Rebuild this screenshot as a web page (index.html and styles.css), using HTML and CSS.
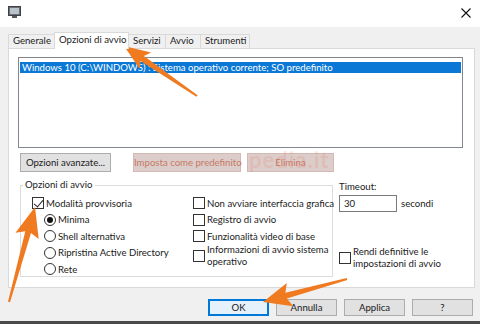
FILE: index.html
```html
<!DOCTYPE html>
<html lang="it">
<head>
    <meta charset="UTF-8">
    <title>Configurazione di sistema</title>
    <link rel="stylesheet" href="styles.css">
</head>
<body>
    <div class="titlebar">
        <svg class="app-icon" width="13" height="13" viewBox="0 0 13 13">
            <rect x="0.5" y="0.5" width="12" height="9" fill="#6b6f75" stroke="#3e4247"/>
            <rect x="2" y="2" width="9" height="6" fill="#b9c3cc"/>
            <rect x="4" y="10" width="5" height="2" fill="#55595e"/>
        </svg>
        <svg class="close" width="10" height="10" viewBox="0 0 10 10">
            <path d="M0.5 0.5 L9.5 9.5 M9.5 0.5 L0.5 9.5" stroke="#111" stroke-width="1.1"/>
        </svg>
    </div>

    <div class="tabs">
        <div class="tab">Generale</div>
        <div class="tab active">Opzioni di avvio</div>
        <div class="tab">Servizi</div>
        <div class="tab">Avvio</div>
        <div class="tab">Strumenti</div>
    </div>

    <div class="panel">
        <div class="os-list">
            <div class="os-row">Windows 10 (C:\WINDOWS) : Sistema operativo corrente; SO predefinito</div>
        </div>

        <div class="list-buttons">
            <div class="btn btn-adv">Opzioni avanzate...</div>
            <div class="btn btn-off btn-default">Imposta come predefinito</div>
            <div class="btn btn-off btn-delete">Elimina</div>
        </div>

        <div class="lower">
            <fieldset class="group">
                <legend>Opzioni di avvio</legend>
                <div class="group-cols">
                    <div class="col-left">
                        <div class="opt"><span class="box checked"></span>Modalità provvisoria</div>
                        <div class="opt sub"><span class="radio on"></span>Minima</div>
                        <div class="opt sub"><span class="radio"></span>Shell alternativa</div>
                        <div class="opt sub"><span class="radio"></span>Ripristina Active Directory</div>
                        <div class="opt sub"><span class="radio"></span>Rete</div>
                    </div>
                    <div class="col-right">
                        <div class="opt"><span class="box"></span>Non avviare interfaccia grafica</div>
                        <div class="opt"><span class="box"></span>Registro di avvio</div>
                        <div class="opt"><span class="box"></span>Funzionalità video di base</div>
                        <div class="opt two-line"><span class="box"></span><span>Informazioni di avvio sistema<br>operativo</span></div>
                    </div>
                </div>
            </fieldset>

            <div class="timeout">
                <div class="timeout-label">Timeout:</div>
                <div class="timeout-row">
                    <div class="textbox">30</div>
                    <span>secondi</span>
                </div>
                <div class="opt two-line persist"><span class="box"></span><span>Rendi definitive le<br>impostazioni di avvio</span></div>
            </div>
        </div>

        <div class="watermark">pedia.it</div>
    </div>

    <div class="dialog-buttons">
        <div class="btn btn-ok">OK</div>
        <div class="btn">Annulla</div>
        <div class="btn">Applica</div>
        <div class="btn">?</div>
    </div>
    <div class="frame-bottom"></div>

    <!-- frecce di evidenziazione -->
    <svg class="arrows" width="480" height="324" viewBox="0 0 480 324">
        <polygon points="197.6,95.2 143.9,55.9 151.1,52.4 124,46 139.8,68.9 140.5,60.9 196.4,96.8"/>
        <polygon points="10,302.3 31,232.9 38.7,239.1 35,207 15.5,232.8 25.3,231.3 8,301.7"/>
        <polygon points="346.7,278 285.4,292.8 286.8,283 263,302 293.2,306.2 286.9,298.6 347.3,280"/>
    </svg>
</body>
</html>
```

FILE: styles.css
```css
* {
    margin: 0;
    padding: 0;
    box-sizing: border-box;
}

body {
    width: 480px;
    height: 324px;
    overflow: hidden;
    position: relative;
    font-family: 'Lato', 'Noto Sans', sans-serif;
    font-size: 9.6px;
    color: #1a1a1a;
    background-color: #f0f0f0;
}

.titlebar {
    height: 27px;
    background-color: #fff;
    display: flex;
    align-items: center;
    justify-content: space-between;
    padding: 0 9px 2px 8px;
}

.tabs {
    display: flex;
    align-items: flex-end;
    height: 21px;
    padding-left: 8px;
}

.tab {
    height: 14px;
    line-height: 12px;
    padding: 0 4px;
    border: 1px solid #d9d9d9;
    border-bottom: none;
    border-right: none;
    background-color: #f0f0f0;
    white-space: nowrap;
}

.tab:nth-child(1) {
    width: 46px;
}

.tab:nth-child(3) {
    width: 36px;
}

.tab:nth-child(4) {
    width: 35px;
}

.tab:nth-child(5) {
    width: 50px;
    border-right: 1px solid #d9d9d9;
}

.tab.active {
    height: 17px;
    line-height: 14px;
    width: 75px;
    background-color: #fff;
    border-right: 1px solid #d9d9d9;
    margin-bottom: -1px;
    position: relative;
    z-index: 1;
}

.tab.active + .tab {
    border-left: none;
}

.panel {
    position: relative;
    height: 240px;
    margin: 0 5px 0 8px;
    padding: 8px 11px 0 9px;
    background-color: #fff;
    border: 1px solid #d9d9d9;
}

.os-list {
    height: 91px;
    border: 1px solid #828790;
    padding: 4px 1px 0 1px;
}

.os-row {
    height: 11px;
    line-height: 11px;
    padding-left: 2px;
    background-color: #0a78d4;
    color: #fff;
    white-space: nowrap;
}

.list-buttons {
    display: flex;
    margin-top: 5px;
    padding-left: 2px;
}

.btn {
    height: 19px;
    line-height: 17px;
    text-align: center;
    background-color: #e1e1e1;
    border: 1px solid #adadad;
    white-space: nowrap;
}

.btn-adv {
    width: 91px;
}

.btn-off {
    background-color: #dccdca;
    border-color: #d4b9b2;
    color: #c57a66;
}

.btn-default {
    width: 108px;
    margin-left: 22px;
}

.btn-delete {
    width: 87px;
    margin-left: 6px;
}

.watermark {
    position: absolute;
    left: 240px;
    top: 97px;
    font-size: 22px;
    font-weight: bold;
    letter-spacing: 1px;
    color: rgba(236, 104, 80, 0.18);
}

.lower {
    display: flex;
    margin-top: 7px;
    padding-left: 2px;
}

.group {
    width: 313px;
    min-width: 0;
    flex-shrink: 0;
    height: 98px;
    border: 1px solid #dcdcdc;
    padding: 4px 0 0 11px;
}

.group legend {
    margin-left: -9px;
    padding: 0 2px;
    line-height: 12px;
}

.group-cols {
    display: flex;
}

.col-left {
    width: 161px;
    flex-shrink: 0;
}

.opt {
    display: flex;
    align-items: center;
    height: 16.5px;
    white-space: nowrap;
}

.opt.sub {
    padding-left: 12px;
}

.opt.two-line {
    height: 26px;
    line-height: 12px;
    margin-top: -2px;
}

.box {
    width: 12px;
    height: 12px;
    border: 1px solid #333;
    background-color: #fff;
    margin-right: 2px;
    flex-shrink: 0;
    position: relative;
}

.box.checked::after {
    content: '';
    position: absolute;
    left: 3px;
    top: 0;
    width: 4px;
    height: 8px;
    border: solid #222;
    border-width: 0 1.3px 1.3px 0;
    transform: rotate(40deg);
}

.radio {
    width: 12px;
    height: 12px;
    border: 1px solid #333;
    border-radius: 50%;
    background-color: #fff;
    margin-right: 2px;
    flex-shrink: 0;
    position: relative;
}

.radio.on::after {
    content: '';
    position: absolute;
    left: 2px;
    top: 2px;
    width: 6px;
    height: 6px;
    border-radius: 50%;
    background-color: #111;
}

.timeout {
    margin-left: 6px;
    padding-top: 2px;
}

.timeout-label {
    line-height: 12px;
}

.timeout-row {
    display: flex;
    align-items: center;
    gap: 4px;
    margin-top: 2px;
}

.textbox {
    width: 58px;
    height: 17px;
    line-height: 15px;
    padding-left: 4px;
    border: 1px solid #7a7a7a;
    background-color: #fff;
}

.opt.persist {
    margin-top: 33px;
}

.dialog-buttons {
    display: flex;
    justify-content: flex-end;
    gap: 7px;
    padding: 11px 7px 0 0;
}

.dialog-buttons .btn {
    width: 61px;
    height: 17px;
    line-height: 15px;
}

.btn-ok {
    border: 2px solid #0078d7 !important;
    line-height: 13px !important;
    background-color: #e5f1fb !important;
}

.frame-bottom {
    margin-top: 5px;
    height: 3px;
    background-color: #4a4a4a;
}

.arrows {
    position: absolute;
    left: 0;
    top: 0;
    pointer-events: none;
}

.arrows polygon {
    fill: #f07a1f;
}
```
